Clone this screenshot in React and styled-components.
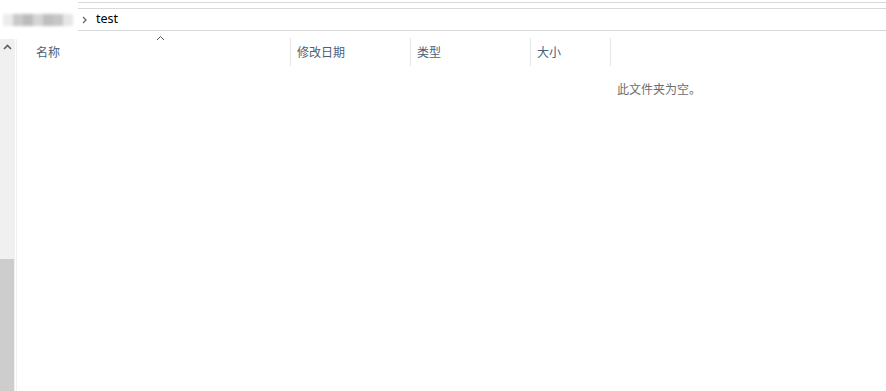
import styled, { createGlobalStyle } from 'styled-components';

const Global = createGlobalStyle`
  html, body { margin: 0; padding: 0; background: #fff; }
  body {
    width: 886px;
    height: 391px;
    overflow: hidden;
    font-family: "Noto Sans CJK SC", "Noto Sans", sans-serif;
  }
`;

const Window = styled.div`
  width: 886px;
  height: 391px;
  display: flex;
  flex-direction: column;
  background: #fff;
  overflow: hidden;
`;

const TopStrip = styled.div`
  height: 2px;
  border-bottom: 1px solid #d9d9d9;
  margin-bottom: 5px;
`;

const AddressBar = styled.div`
  position: relative;
  height: 21px;
  border-top: 1px solid #d9d9d9;
  border-bottom: 1px solid #d9d9d9;
  display: flex;
  align-items: center;
  font-size: 12.5px;
  color: #000;
`;

const Blur = styled.div`
  position: absolute;
  left: 0;
  top: -8px;
  width: 78px;
  height: 38px;
  background: #fff;
  display: flex;
  align-items: center;
  padding-left: 3px;
  box-sizing: border-box;
`;

const BlurStrip = styled.div`
  width: 70px;
  height: 12px;
  display: flex;
  filter: blur(1.8px);
`;

const BlurCell = styled.span`
  flex: 1;
  background: ${p => p.$c};
`;

const Chevron = styled.span`
  margin-left: 82px;
  width: 6px;
  display: flex;
  align-items: center;
`;

const Crumb = styled.span`
  margin-left: 8px;
  font-family: "Noto Sans", sans-serif;
  font-size: 12.5px;
  line-height: 1;
`;

const Body = styled.div`
  flex: 1;
  display: flex;
  padding-top: 7px;
`;

const ScrollBar = styled.div`
  width: 15px;
  background: #f0f0f0;
  display: flex;
  flex-direction: column;
`;

const ArrowBtn = styled.div`
  height: 17px;
  display: flex;
  align-items: center;
  justify-content: center;
`;

const Track = styled.div`
  flex: 1;
  display: flex;
  flex-direction: column;
  padding-top: 204px;
`;

const Thumb = styled.div`
  flex: 1;
  width: 14px;
  background: #cdcdcd;
`;

const Divider = styled.div`
  width: 1px;
  margin-left: 1px;
  background: #f0f0f0;
`;

const Content = styled.div`
  flex: 1;
  display: flex;
  flex-direction: column;
`;

const HeaderRow = styled.div`
  display: flex;
  height: 28px;
`;

const HeaderCell = styled.div`
  position: relative;
  width: ${p => p.$w}px;
  padding-left: ${p => p.$pad}px;
  box-sizing: border-box;
  border-right: 1px solid #e5e5e5;
  font-size: 12px;
  color: #4c607a;
  display: flex;
  align-items: center;
  padding-bottom: 2px;
`;

const SortCaret = styled.span`
  position: absolute;
  top: -3px;
  left: ${p => p.$x}px;
  display: flex;
`;

const Empty = styled.div`
  margin-left: 600px;
  margin-top: 14px;
  font-size: 12px;
  color: #6d6d6d;
`;

const columns = [
  { label: '名称', w: 274, pad: 19 },
  { label: '修改日期', w: 120, pad: 6 },
  { label: '类型', w: 120, pad: 6 },
  { label: '大小', w: 80, pad: 6 },
];

const blurs = ['#ececec', '#cacaca', '#bcbcbc', '#d6d6d6', '#bfbfbf', '#c6c6c6', '#e6e6e6'];

export default function App() {
  return (
    <Window>
      <Global />
      <TopStrip />
      <AddressBar>
        <Blur>
          <BlurStrip>
            {blurs.map((c, i) => <BlurCell key={i} $c={c} />)}
          </BlurStrip>
        </Blur>
        <Chevron>
          <svg width="5" height="8" viewBox="0 0 5 8">
            <path d="M1 1 L4 4 L1 7" fill="none" stroke="#666" strokeWidth="1.3" />
          </svg>
        </Chevron>
        <Crumb>test</Crumb>
      </AddressBar>
      <Body>
        <ScrollBar>
          <ArrowBtn>
            <svg width="9" height="6" viewBox="0 0 9 6">
              <path d="M1 5 L4.5 1.5 L8 5" fill="none" stroke="#606060" strokeWidth="1.6" />
            </svg>
          </ArrowBtn>
          <Track>
            <Thumb />
          </Track>
        </ScrollBar>
        <Divider />
        <Content>
          <HeaderRow>
            {columns.map((c, i) => (
              <HeaderCell key={c.label} $w={c.w} $pad={c.pad}>
                {i === 0 && (
                  <SortCaret $x={139}>
                    <svg width="9" height="6" viewBox="0 0 9 6">
                      <path d="M1 5 L4.5 1.5 L8 5" fill="none" stroke="#555" strokeWidth="1" />
                    </svg>
                  </SortCaret>
                )}
                {c.label}
              </HeaderCell>
            ))}
          </HeaderRow>
          <Empty>此文件夹为空。</Empty>
        </Content>
      </Body>
    </Window>
  );
}
